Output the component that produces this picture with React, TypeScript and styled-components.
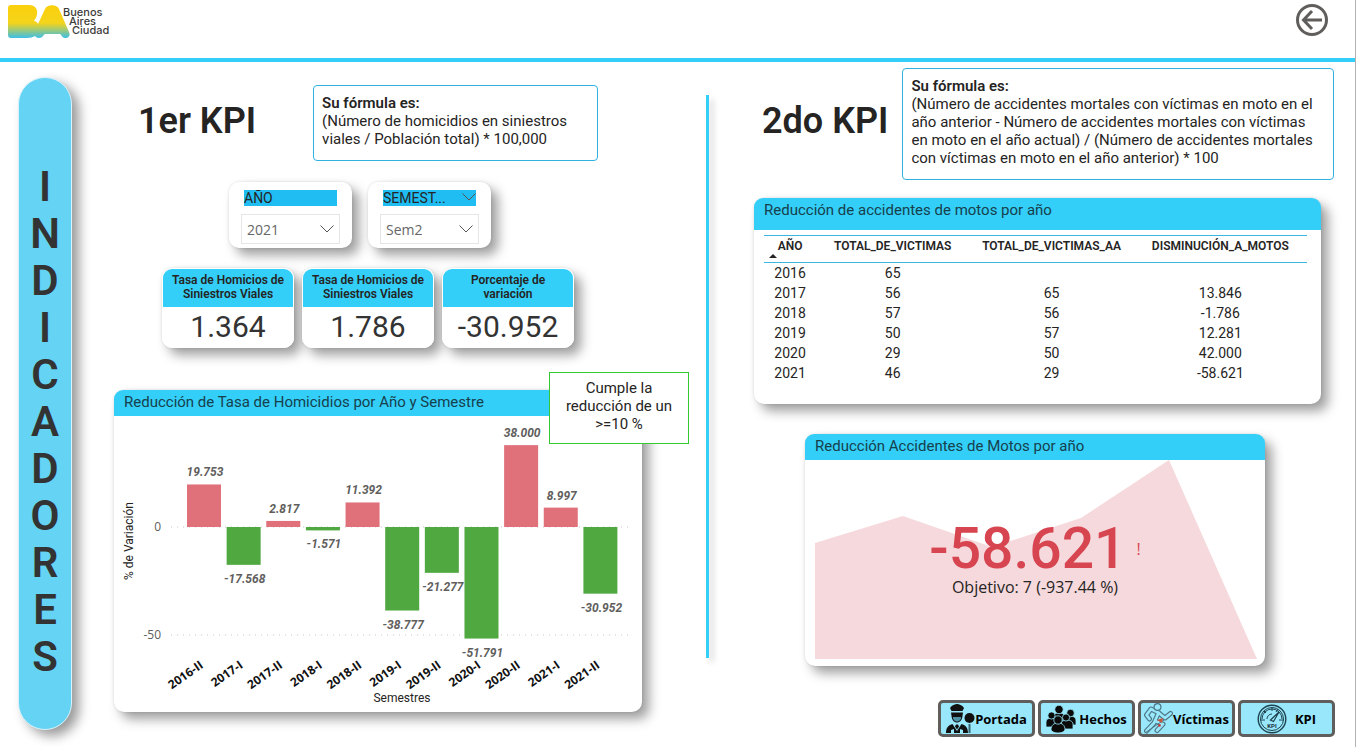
import React from 'react';
import styled, { createGlobalStyle } from 'styled-components';

const din = 'Roboto, "Liberation Sans", sans-serif';
const segoe = '"Open Sans", "Noto Sans", sans-serif';
const cyan = '#33cff8';

const GlobalStyle = createGlobalStyle`
  * { box-sizing: border-box; }
  body { margin: 0; background: #fff; color: #252423; font-family: ${din}; }
`;

const Page = styled.div`
  min-height: 100vh;
  margin-right: 3px;
  border-right: 1px solid #b3b0ad;
`;

const Header = styled.header`
  display: flex;
  justify-content: space-between;
  align-items: flex-start;
  height: 62px;
  padding: 4px 27px 0 8px;
  border-bottom: 4px solid ${cyan};
`;

const Brand = styled.div`
  display: flex;
  align-items: flex-start;
`;

const BrandName = styled.div`
  display: flex;
  flex-direction: column;
  margin-left: -8px;
  padding-top: 4px;
  font: 500 11px/9px Inter, sans-serif;
  color: #3c3c3b;
`;

const BrandLine = styled.span<{ $indent: number }>`
  padding-left: ${(p) => p.$indent}px;
`;

const BackButton = styled.button`
  display: flex;
  padding: 0;
  border: 0;
  background: none;
  cursor: pointer;
`;

const Main = styled.main`
  display: flex;
  align-items: flex-start;
  padding: 6px 20px 9px 18px;
`;

const Pill = styled.aside`
  display: flex;
  flex-direction: column;
  align-items: center;
  flex: 0 0 54px;
  margin: 9px 42px 0 0;
  padding: 85px 0 49px;
  border: 1px solid #d9f3fc;
  border-radius: 27px;
  background: #64d3f4;
  box-shadow: 7px 6px 12px rgba(0, 0, 0, 0.4);
  font-weight: 600;
  font-size: 42px;
  line-height: 47px;
  color: #333;
`;

const FirstColumn = styled.section`
  flex: 575 1 0;
  min-width: 0;
  padding-top: 17px;
`;

const SecondColumn = styled.section`
  flex: 581 1 0;
  min-width: 0;
`;

const Divider = styled.div`
  align-self: flex-start;
  flex: 0 0 3px;
  height: 563px;
  margin: 27px 45px 0 17px;
  background: ${cyan};
  box-shadow: 4px 4px 6px rgba(0, 0, 0, 0.2);
`;

const Intro = styled.div<{ $indent: number; $gap: number; $titleTop: number }>`
  display: flex;
  align-items: flex-start;
  gap: ${(p) => p.$gap}px;
  padding-left: ${(p) => p.$indent}px;

  h2 {
    flex: none;
    margin: ${(p) => p.$titleTop}px 0 0;
    font-size: 36px;
    line-height: 42px;
    font-weight: 600;
    white-space: nowrap;
  }
`;

const Formula = styled.p<{ $width: number }>`
  flex: 0 0 ${(p) => p.$width}px;
  margin: 0;
  padding: 8px 8px 12px;
  border: 1px solid #2fb2e0;
  border-radius: 4px;
  font-size: 15px;
  line-height: 18px;

  strong { display: block; font-weight: 600; }
`;

const Slicers = styled.div`
  display: flex;
  gap: 16px;
  margin: 21px 0 20px 115px;
`;

const shadow = '7px 7px 12px rgba(0, 0, 0, 0.38), 0 0 3px rgba(0, 0, 0, 0.12)';

const Slicer = styled.div`
  width: 123px;
  height: 66px;
  padding: 8px 12px 6px;
  border-radius: 10px;
  background: #fff;
  box-shadow: ${shadow};
`;

const SlicerTitle = styled.label`
  display: flex;
  justify-content: space-between;
  height: 16px;
  margin: 0 3px 8px;
  background: #1fbdf2;
  font-size: 14px;
  line-height: 16px;

  svg { margin-top: 3px; }
`;

const SelectBox = styled.div`
  position: relative;

  select {
    width: 100%;
    height: 30px;
    padding: 0 5px;
    border: 1px solid #e6e6e6;
    border-radius: 0;
    background: #fff;
    appearance: none;
    font: 14px ${segoe};
    color: #666;
  }

  svg {
    position: absolute;
    right: 6px;
    top: 11px;
    pointer-events: none;
  }
`;

const Cards = styled.div`
  display: flex;
  gap: 8px;
  margin-left: 48px;
`;

const Card = styled.article`
  width: 132px;
  overflow: hidden;
  border: 1px solid #fff;
  border-radius: 10px;
  background: #fff;
  text-align: center;

  h3 {
    margin: 0;
    padding: 4px 0 6px;
    background: ${cyan};
    font-size: 12px;
    line-height: 14px;
    font-weight: 600;
  }

  p {
    margin: 0;
    font-size: 30px;
    line-height: 40px;
    color: #333;
  }
`;

const CardShadow = styled.div`
  border-radius: 10px;
  box-shadow: ${shadow};
`;

const Panel = styled.section<{ $width: number; $left: number; $top: number }>`
  position: relative;
  max-width: ${(p) => p.$width}px;
  margin: ${(p) => p.$top}px 0 0 ${(p) => p.$left}px;
  border-radius: 10px;
  background: #fff;
  box-shadow: ${shadow};
`;

const PanelTitle = styled.h3<{ $height: number }>`
  height: ${(p) => p.$height}px;
  margin: 0;
  padding: 0 10px;
  border-radius: 9px 9px 0 0;
  background: ${cyan};
  font-size: 15px;
  line-height: 25px;
  font-weight: 400;
  color: #17404d;
`;

const Callout = styled.p`
  position: absolute;
  right: -47px;
  top: -18px;
  width: 140px;
  margin: 0;
  padding: 6px 12px 10px;
  border: 1px solid #34c92f;
  background: #fff;
  font-size: 15px;
  line-height: 18px;
  text-align: center;
`;

const Chart = styled.svg`
  display: block;
  width: 100%;
  height: auto;
`;

const ValueText = styled.text`
  font: italic 700 12px ${din};
  fill: #605e5c;
  text-anchor: middle;
`;

const CategoryText = styled.text`
  font: 700 12px ${segoe};
  fill: #111;
  text-anchor: end;
`;

const AxisText = styled.text`
  font: 12px ${segoe};
  fill: #605e5c;
  text-anchor: end;
`;

const AxisTitle = styled.text`
  font: 12px ${din};
  fill: #252423;
  text-anchor: middle;
`;

const TableWrap = styled.div`
  padding: 5px 14px 21px 10px;
`;

const Table = styled.table`
  width: 100%;
  border-collapse: collapse;
  table-layout: fixed;
  text-align: center;

  th {
    position: relative;
    height: 27px;
    padding: 1px 0 8px;
    border-top: 1px solid #3bb8e0;
    border-bottom: 1px solid #3bb8e0;
    font-size: 12px;
    line-height: 16px;
    font-weight: 600;
  }

  td {
    height: 20px;
    padding: 0;
    font-size: 14px;
    line-height: 20px;
  }
`;

const SortMark = styled.svg`
  position: absolute;
  left: 5px;
  bottom: 4px;
`;

const Gauge = styled.div`
  position: relative;
`;

const GaugeText = styled.div`
  position: absolute;
  inset: 0;
  display: flex;
  flex-direction: column;
  align-items: center;
  padding-top: 62px;
  color: #252423;
  font: 16px/22px ${segoe};
`;

const GaugeValue = styled.div`
  display: flex;
  align-items: center;
  gap: 10px;
  color: #d64550;
  font: 500 57px/54px ${din};

  small { font: 16px/20px ${segoe}; }
`;

const Nav = styled.nav`
  display: flex;
  justify-content: flex-end;
  gap: 3px;
  margin-top: 34px;
`;

const NavButton = styled.button<{ $spread?: number }>`
  display: flex;
  align-items: center;
  justify-content: center;
  gap: ${(p) => p.$spread ?? 0}px;
  width: 97px;
  height: 37px;
  padding: 0;
  border: 3px solid #605e5c;
  border-radius: 5px;
  background: #98e7fb;
  font: 700 13px ${segoe};
  color: #000;
  cursor: pointer;

  svg { flex: none; }
`;

const Chevron = () => (
  <svg width="14" height="8" viewBox="0 0 14 8" fill="none" stroke="#555" aria-hidden="true">
    <path d="M0.5 0.5 7 7 13.5 0.5" />
  </svg>
);

const Logo = () => (
  <svg width="63" height="35" viewBox="0 0 63 35" aria-hidden="true">
    <defs>
      <linearGradient id="ba" x1="0" y1="0" x2="0" y2="1">
        <stop offset="0" stopColor="#fbd00b" />
        <stop offset="0.55" stopColor="#f4d41c" />
        <stop offset="0.8" stopColor="#8cc88a" />
        <stop offset="1" stopColor="#3cbfe8" />
      </linearGradient>
    </defs>
    <path
      fill="url(#ba)"
      d="M3 1H21C27 1 30 5 29 10C29 13 27 15 26 17C28 17 30 19 30 20L37 5C39 0 49 0 51 5L61 28C63 32 60 34 57 34C54 34 54 31 52 30H37C35 31 35 34 31 34C29 34 28 33 27 32C25 33 22 34 19 34H3C1 34 0 33 0 31V4C0 2 1 1 3 1Z"
    />
  </svg>
);

const PoliceIcon = () => (
  <svg width="29" height="30" viewBox="0 0 29 30" fill="#111" aria-hidden="true">
    <path d="M4 4C6 1 9 0 11 0S16 1 18 4L16.500 7H5.500Z" />
    <path d="M5 8.500H17L16.500 12C16 17 13 18.500 11 18.500S6 17 5.500 12Z" />
    <path d="M7 13H15V14.500C14 17 12 17.500 11 17.500S8 17 7 14.500Z" fill="#4d93a5" />
    <path d="M0 29C0 23 3 21 6.500 20L11 27 15.500 20C19 21 22 23 22 29H17V26L14 25V29H8V25L5 26V29Z" />
    <path d="M10 20.500h2l1 2-2 3-2-3z" />
    <circle cx="23.500" cy="14" r="5" />
    <path d="M23.500 20V29" stroke="#3a6471" strokeWidth="2" />
  </svg>
);

const PeopleIcon = () => (
  <svg width="30" height="28" viewBox="0 0 30 28" fill="#0a0a0a" stroke="#98e7fb" strokeWidth="0.8" aria-hidden="true">
    <path d="M7 18V12C7 9 10 8 13 8S19 9 19 12V18Z" />
    <circle cx="13" cy="4.500" r="4.200" />
    <path d="M17 20V16C17 12 20 11 23.500 11S30 12 30 16V20Z" />
    <circle cx="24.500" cy="8" r="3.800" />
    <path d="M0 22V17C0 14 3 13 5.500 13S11 14 11 17V22Z" />
    <circle cx="5.500" cy="10.500" r="3.600" />
    <path d="M15 24V19C15 16 18 15 20.500 15S27 16 27 19V24Z" />
    <circle cx="20" cy="12.500" r="3.600" />
    <path d="M5 25C5 20 8 18 12 18S19 20 19 25C17 29 7 29 5 25Z" />
    <circle cx="12" cy="15" r="4.200" />
  </svg>
);

const limbs = 'M15 10 7 6 2.500 12 5.500 16M16 11 21 15 26.500 10.500M14 11 10 20 2.500 28M11 18 19 21 13 27.500';

const VictimIcon = () => (
  <svg width="29" height="31" viewBox="0 0 29 31" fill="none" strokeLinejoin="round" strokeLinecap="round" aria-hidden="true">
    <path d={limbs} stroke="#4d7684" strokeWidth="5" />
    <path d={limbs} stroke="#98e7fb" strokeWidth="2.800" />
    <circle cx="13.500" cy="4" r="3.400" fill="#98e7fb" stroke="#4d7684" strokeWidth="1.200" />
    <path d="M1.500 29.500 20 17" stroke="#4d7684" />
    <path d="M13 17 19 15 18 20Z" fill="#c4583d" />
    <circle cx="15.500" cy="22.500" r="1.300" fill="#d33" />
  </svg>
);

const MeterIcon = () => (
  <svg width="30" height="30" viewBox="0 0 30 30" fill="none" stroke="#1e4450" aria-hidden="true">
    <circle cx="15" cy="15" r="13.800" strokeWidth="1.400" />
    <circle cx="15" cy="15" r="11.500" />
    <path d="M5 15A10 10 0 0 1 25 15M8 16H3M22 16H27M9 9 7 7M15 7V3M19 8 21 5M10 15A5 5 0 0 1 15 10" />
    <path d="M13.500 16 22 8 16.500 17.500Z" strokeWidth="1.200" />
    <text x="15" y="24" textAnchor="middle" fontFamily="Roboto, sans-serif" fontSize="6" fontWeight="700" fill="#1e3038" stroke="none">KPI</text>
  </svg>
);

const bars = [
  { name: '2016-II', value: 19.753, label: '19.753' },
  { name: '2017-I', value: -17.568, label: '-17.568' },
  { name: '2017-II', value: 2.817, label: '2.817' },
  { name: '2018-I', value: -1.571, label: '-1.571' },
  { name: '2018-II', value: 11.392, label: '11.392' },
  { name: '2019-I', value: -38.777, label: '-38.777' },
  { name: '2019-II', value: -21.277, label: '-21.277' },
  { name: '2020-I', value: -51.791, label: '-51.791' },
  { name: '2020-II', value: 38, label: '38.000' },
  { name: '2021-I', value: 8.997, label: '8.997' },
  { name: '2021-II', value: -30.952, label: '-30.952' },
];

const rows = [
  ['2016', '65', '', ''],
  ['2017', '56', '65', '13.846'],
  ['2018', '57', '56', '-1.786'],
  ['2019', '50', '57', '12.281'],
  ['2020', '29', '50', '42.000'],
  ['2021', '46', '29', '-58.621'],
];

const zeroY = 111;
const unit = 2.154;
const firstBar = 90;
const pitch = 39.64;

const BarChart = () => (
  <Chart viewBox="0 0 528 296" role="img" aria-label="% de Variación por semestre">
    <g stroke="#c8c6c4" strokeDasharray="1 5">
      <line x1="57" x2="518" y1={zeroY} y2={zeroY} />
      <line x1="57" x2="518" y1={zeroY + 108} y2={zeroY + 108} />
    </g>
    <AxisText x="47" y="115">0</AxisText>
    <AxisText x="47" y="223">-50</AxisText>
    <AxisTitle transform="translate(19 125) rotate(-90)">% de Variación</AxisTitle>
    <AxisTitle x="288" y="286">Semestres</AxisTitle>
    {bars.map((bar, i) => {
      const center = firstBar + i * pitch;
      const size = Math.abs(bar.value) * unit;
      const up = bar.value > 0;
      return (
        <g key={bar.name}>
          <rect x={center - 17} y={up ? zeroY - size : zeroY} width="34" height={size} fill={up ? '#e0707a' : '#50a840'} />
          <ValueText x={center + 1} y={up ? zeroY - size - 8 : zeroY + size + 18}>{bar.label}</ValueText>
          <CategoryText transform={`translate(${center} 251) rotate(-35)`}>{bar.name}</CategoryText>
        </g>
      );
    })}
  </Chart>
);

export default function App() {
  return (
    <>
      <GlobalStyle />
      <Page>
        <Header>
          <Brand>
            <Logo />
            <BrandName>
              <BrandLine $indent={0}>Buenos</BrandLine>
              <BrandLine $indent={6}>Aires</BrandLine>
              <BrandLine $indent={9}>Ciudad</BrandLine>
            </BrandName>
          </Brand>
          <BackButton aria-label="Volver">
            <svg width="32" height="32" viewBox="0 0 32 32" fill="none" stroke="#605e5c" strokeWidth="3">
              <circle cx="16" cy="16" r="14.500" />
              <path d="M26 16H8M16 7 7.500 16 16 25" />
            </svg>
          </BackButton>
        </Header>
        <Main>
          <Pill>
            {'INDICADORES'.split('').map((letter, i) => (
              <span key={i}>{letter}</span>
            ))}
          </Pill>

          <FirstColumn>
            <Intro $indent={24} $gap={57} $titleTop={15}>
              <h2>1er KPI</h2>
              <Formula $width={285}>
                <strong>Su fórmula es:</strong>
                (Número de homicidios en siniestros viales / Población total) * 100,000
              </Formula>
            </Intro>
            <Slicers>
              <Slicer>
                <SlicerTitle htmlFor="year">AÑO</SlicerTitle>
                <SelectBox>
                  <select id="year" defaultValue="2021"><option>2021</option></select>
                  <Chevron />
                </SelectBox>
              </Slicer>
              <Slicer>
                <SlicerTitle htmlFor="semester">SEMEST... <Chevron /></SlicerTitle>
                <SelectBox>
                  <select id="semester" defaultValue="Sem2"><option>Sem2</option></select>
                  <Chevron />
                </SelectBox>
              </Slicer>
            </Slicers>
            <Cards>
              <CardShadow><Card><h3>Tasa de Homicios de Siniestros Viales</h3><p>1.364</p></Card></CardShadow>
              <CardShadow><Card><h3>Tasa de Homicios de Siniestros Viales</h3><p>1.786</p></Card></CardShadow>
              <CardShadow><Card><h3>Porcentaje de<br />variación</h3><p>-30.952</p></Card></CardShadow>
            </Cards>
            <Panel $width={528} $left={0} $top={42}>
              <PanelTitle $height={26}>Reducción de Tasa de Homicidios por Año y Semestre</PanelTitle>
              <BarChart />
              <Callout>Cumple la reducción de un &gt;=10 %</Callout>
            </Panel>
          </FirstColumn>

          <Divider />

          <SecondColumn>
            <Intro $indent={8} $gap={14} $titleTop={32}>
              <h2>2do KPI</h2>
              <Formula $width={432}>
                <strong>Su fórmula es:</strong>
                (Número de accidentes mortales con víctimas en moto en el año anterior - Número de accidentes mortales con víctimas en moto en el año actual) / (Número de accidentes mortales con víctimas en moto en el año anterior) * 100
              </Formula>
            </Intro>
            <Panel $width={567} $left={0} $top={18}>
              <PanelTitle $height={32}>Reducción de accidentes de motos por año</PanelTitle>
              <TableWrap>
                <Table>
                  <colgroup>
                    <col width="52" />
                    <col width="153" />
                    <col width="164" />
                    <col width="173" />
                  </colgroup>
                  <thead>
                    <tr>
                      <th>
                        AÑO
                        <SortMark width="8" height="4" viewBox="0 0 8 4"><path d="M0 4 4 0 8 4Z" fill="#252423" /></SortMark>
                      </th>
                      <th>TOTAL_DE_VICTIMAS</th>
                      <th>TOTAL_DE_VICTIMAS_AA</th>
                      <th>DISMINUCIÓN_A_MOTOS</th>
                    </tr>
                  </thead>
                  <tbody>
                    {rows.map((row) => (
                      <tr key={row[0]}>
                        {row.map((cell, i) => <td key={i}>{cell}</td>)}
                      </tr>
                    ))}
                  </tbody>
                </Table>
              </TableWrap>
            </Panel>
            <Panel $width={460} $left={51} $top={30}>
              <PanelTitle $height={26}>Reducción Accidentes de Motos por año</PanelTitle>
              <Gauge>
                <Chart viewBox="0 0 460 206" aria-hidden="true">
                  <path d="M10 83 98 56 187 87 276 58 364 0 452 199H10Z" fill="#f6d9dc" />
                </Chart>
                <GaugeText>
                  <GaugeValue>-58.621<small>!</small></GaugeValue>
                  Objetivo: 7 (-937.44 %)
                </GaugeText>
              </Gauge>
            </Panel>
            <Nav>
              <NavButton><PoliceIcon />Portada</NavButton>
              <NavButton $spread={3}><PeopleIcon />Hechos</NavButton>
              <NavButton><VictimIcon />Víctimas</NavButton>
              <NavButton $spread={8}><MeterIcon />KPI</NavButton>
            </Nav>
          </SecondColumn>
        </Main>
      </Page>
    </>
  );
}
